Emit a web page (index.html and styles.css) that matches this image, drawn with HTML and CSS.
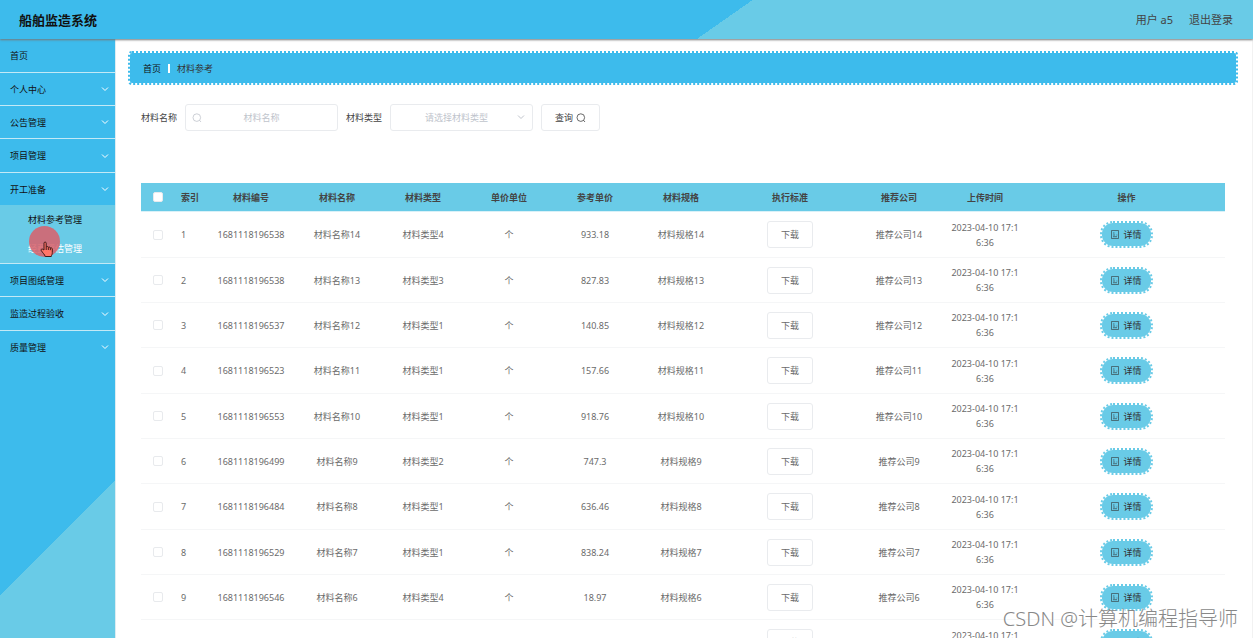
FILE: index.html
```html
<!DOCTYPE html>
<html lang="zh-CN">
<head>
<meta charset="utf-8">
<title>船舶监造系统</title>
<link rel="stylesheet" href="styles.css">
</head>
<body>
<svg class="defs" aria-hidden="true">
  <symbol id="chevron" viewBox="0 0 8 8"><path d="M1 2.5 4 5.5 7 2.5" fill="none" stroke="currentColor"/></symbol>
  <symbol id="search" viewBox="0 0 10 10"><circle cx="4.8" cy="4.6" r="3.8" fill="none" stroke="currentColor" stroke-width=".8"/><path d="M7.5 7.3 9 9" stroke="currentColor" stroke-width=".8"/></symbol>
  <symbol id="doc" viewBox="0 0 8 9"><path d="M.5.5h7v8h-7zM2 3h1.500M2 5h2M2 6.700h4M5.500 5h.8" fill="none" stroke="currentColor" stroke-width=".6"/></symbol>
</svg>
<header class="topbar">
  <h1 class="brand">船舶监造系统</h1>
  <div class="account"><span>用户 a5</span><a class="logout" href="#">退出登录</a></div>
</header>
<div class="layout">
  <nav class="sidebar">
    <ul class="menu">
      <li><a class="item" href="#">首页</a></li>
      <li><a class="item" href="#">个人中心<svg class="chev"><use href="#chevron"/></svg></a></li>
      <li><a class="item" href="#">公告管理<svg class="chev"><use href="#chevron"/></svg></a></li>
      <li><a class="item" href="#">项目管理<svg class="chev"><use href="#chevron"/></svg></a></li>
      <li><a class="item" href="#">开工准备<svg class="chev"><use href="#chevron"/></svg></a>
        <ul class="submenu">
          <li><a class="subitem" href="#">材料参考管理</a></li>
          <li><a class="subitem hover" href="#">经费评估管理</a></li>
        </ul>
      </li>
      <li><a class="item" href="#">项目图纸管理<svg class="chev"><use href="#chevron"/></svg></a></li>
      <li><a class="item" href="#">监造过程验收<svg class="chev"><use href="#chevron"/></svg></a></li>
      <li><a class="item" href="#">质量管理<svg class="chev"><use href="#chevron"/></svg></a></li>
    </ul>
  </nav>
  <main class="content">
    <div class="crumbs"><a class="home" href="#">首页</a><span class="bar"></span><span>材料参考</span></div>
    <form class="filters">
      <label for="name">材料名称</label>
      <div class="field name"><svg class="lens"><use href="#search"/></svg><input id="name" type="text" placeholder="材料名称"></div>
      <label for="type">材料类型</label>
      <div class="field type"><select id="type"><option>请选择材料类型</option></select><svg class="chev"><use href="#chevron"/></svg></div>
      <button class="query" type="button">查询<svg class="lens"><use href="#search"/></svg></button>
    </form>
    <table class="grid">
      <colgroup><col class="c-check"><col class="c-index"><col class="c-std"><col class="c-std"><col class="c-std"><col class="c-std"><col class="c-std"><col class="c-std"><col class="c-file"><col class="c-std"><col class="c-std"><col></colgroup>
      <thead><tr><th><input type="checkbox" aria-label="全选"></th><th class="left">索引</th><th>材料编号</th><th>材料名称</th><th>材料类型</th><th>单价单位</th><th>参考单价</th><th>材料规格</th><th>执行标准</th><th>推荐公司</th><th>上传时间</th><th>操作</th></tr></thead>
      <tbody id="rows"></tbody>
    </table>
  </main>
</div>
<div class="pointer" aria-hidden="true">
  <svg class="hand" viewBox="0 0 14 17"><path d="M4 9V2.2C4 .6 6.2.6 6.2 2.2V6c.4-.8 2-.6 2.1.4.5-.6 1.9-.4 2 .6.7-.5 2 0 2 1v3.5c0 2-.8 2.500-1 4H5.200C4.800 13.500 2.500 11.800 1.300 9.600.6 8.300 2 7.600 2.800 8.300zM6.200 6v3M8.300 6.500V9M10.300 7v2.200"/></svg>
</div>
<div class="watermark">CSDN @计算机编程指导师</div>
<script src="app.js"></script>
</body>
</html>
```
FILE: styles.css
```css
* { box-sizing: border-box; }
body {
  margin: 0;
  height: 100vh;
  overflow: hidden;
  display: flex;
  flex-direction: column;
  background: #fff;
  color: #333;
  font: 9px/15px "Noto Sans", "Noto Sans CJK SC", sans-serif;
}
a { color: inherit; text-decoration: none; }
ul { list-style: none; margin: 0; padding: 0; }
button, input, select { font: inherit; color: inherit; }
.defs { position: absolute; width: 0; height: 0; }

.topbar {
  position: relative;
  z-index: 1;
  flex: none;
  height: 39px;
  padding: 0 20px 0 19px;
  display: flex;
  align-items: center;
  justify-content: space-between;
  background: linear-gradient(145deg, #3dbbec 57.5%, #69cbe7 57.5%);
  box-shadow: 0 1px 2px #777;
}
.brand { margin: 0; font-size: 13px; line-height: 20px; color: #111; }
.account { display: flex; gap: 16px; font-size: 11px; color: #444; }

.layout { flex: 1; min-height: 0; display: flex; }
.sidebar {
  flex: none;
  width: 116px;
  border-right: 1px solid #dcecf2;
  background: linear-gradient(135deg, #3dbbec 78%, #69cbe7 78%);
  color: #111;
}
.item {
  display: flex;
  align-items: center;
  justify-content: space-between;
  height: 32px;
  padding: 0 6px 0 10px;
}
.menu > li { border-bottom: 1px solid #c3e9f6; }
.menu > li:nth-child(3n + 1) > .item { height: 33px; }
.menu > li:last-child { border-bottom: 0; }
.chev { width: 8px; height: 8px; color: #fff; }
.submenu { background: #69cbe7; }
.subitem { display: block; padding: 7px 0 7px 28px; }
.subitem.hover { color: #fff; }

.content { flex: 1; min-width: 0; padding: 12px 14px 0 12px; border-right: 1px solid #f2f2f2; }
.crumbs {
  display: flex;
  align-items: center;
  height: 34px;
  padding: 0 13px;
  border: 2px dotted #3dbbec;
  border-radius: 4px;
  background: #3dbbec;
  background-clip: padding-box;
}
.crumbs .home { color: #111; }
.bar { width: 2px; height: 9px; margin: 0 7px; background: #fff; }

.filters { display: flex; align-items: center; gap: 8px; padding: 19px 13px 0; color: #444; }
.field { position: relative; height: 27px; }
.field.name { width: 153px; }
.field.type { width: 143px; }
.field input, .field select {
  width: 100%;
  height: 100%;
  border: 1px solid #e9ebee;
  border-radius: 3px;
  background: #fff;
  outline: 0;
  text-align: center;
}
.field input { padding: 0 20px; }
.field input::placeholder { color: #c0c4cc; }
.field select { appearance: none; padding: 0 20px 0 10px; color: #c0c4cc; text-align-last: center; }
.field svg { position: absolute; top: 9px; color: #c0c4cc; }
.field .lens { left: 7px; }
.field .chev { right: 8px; }
.lens { width: 10px; height: 10px; }
.query {
  display: flex;
  align-items: center;
  gap: 3px;
  height: 27px;
  padding: 0 13px;
  border: 1px solid #e9ebee;
  border-radius: 3px;
  background: #fff;
}

.grid {
  width: calc(100% - 26px);
  margin: 52px 13px 0;
  table-layout: fixed;
  border-collapse: separate;
  border-spacing: 0;
  text-align: center;
  color: #6b6b6b;
}
.c-check { width: 33px; }
.c-index { width: 34px; }
.c-std { width: 86px; }
.c-file { width: 132px; }
th {
  height: 29px;
  padding: 0 7px;
  border-bottom: 1px solid #d9f1f8;
  background: #69cbe7;
  color: #444;
  font-weight: 700;
}
td { height: 45px; padding: 7px; border-bottom: 1px solid #f5f6f7; word-break: break-all; }
tbody tr:nth-child(3n + 1) td { height: 46px; }
.left { text-align: left; }
td:nth-child(2) { text-align: left; }
.grid td:nth-child(3) { padding: 0; }
.grid th:first-child, .grid td:first-child { padding: 0; }
.grid input {
  appearance: none;
  display: block;
  width: 10px;
  height: 10px;
  margin: 0 auto;
  border: 1px solid #e8eaed;
  border-radius: 2px;
  background: #fff;
}
.download {
  height: 27px;
  padding: 0 13px;
  border: 1px solid #e9ebee;
  border-radius: 3px;
  background: #fff;
}
td button { display: block; margin: 0 auto; }
td .detail {
  display: flex;
  align-items: center;
  gap: 4px;
  height: 27px;
  padding: 0 9px;
  border: 2px dotted #69cbe7;
  border-radius: 13px;
  background: #69cbe7;
  background-clip: padding-box;
  color: #333;
}
.detail svg { width: 8px; height: 9px; }

.pointer {
  position: absolute;
  left: 29px;
  top: 226px;
  z-index: 2;
  width: 31px;
  height: 31px;
  border-radius: 50%;
  background: rgba(220, 95, 105, .85);
}
.hand { position: absolute; left: 11px; top: 15px; width: 14px; height: 17px; fill: #ff7568; stroke: #401818; }
.watermark {
  position: absolute;
  right: 15px;
  bottom: 4px;
  z-index: 2;
  font-size: 20px;
  font-weight: 300;
  line-height: 30px;
  color: #888;
  text-shadow: 1px 1px 0 #fff;
}
```
FILE: app.js
```js
const rows = [
  ["1681118196538", "14", "4", "933.18"],
  ["1681118196538", "13", "3", "827.83"],
  ["1681118196537", "12", "1", "140.85"],
  ["1681118196523", "11", "1", "157.66"],
  ["1681118196553", "10", "1", "918.76"],
  ["1681118196499", "9", "2", "747.3"],
  ["1681118196484", "8", "1", "636.46"],
  ["1681118196529", "7", "1", "838.24"],
  ["1681118196546", "6", "4", "18.97"],
  ["", "", "", ""]
];
document.getElementById("rows").innerHTML = rows.map(([code, n, type, price], i) => `<tr>
  <td><input type="checkbox" aria-label="选择"></td><td>${code ? i + 1 : ""}</td><td>${code}</td>
  <td>${code && "材料名称" + n}</td><td>${code && "材料类型" + type}</td><td>${code && "个"}</td><td>${price}</td><td>${code && "材料规格" + n}</td>
  <td><button class="download" type="button">下载</button></td><td>${code && "推荐公司" + n}</td><td>2023-04-10 17:16:36</td>
  <td><button class="detail" type="button"><svg><use href="#doc"/></svg>详情</button></td></tr>`).join("");
```
